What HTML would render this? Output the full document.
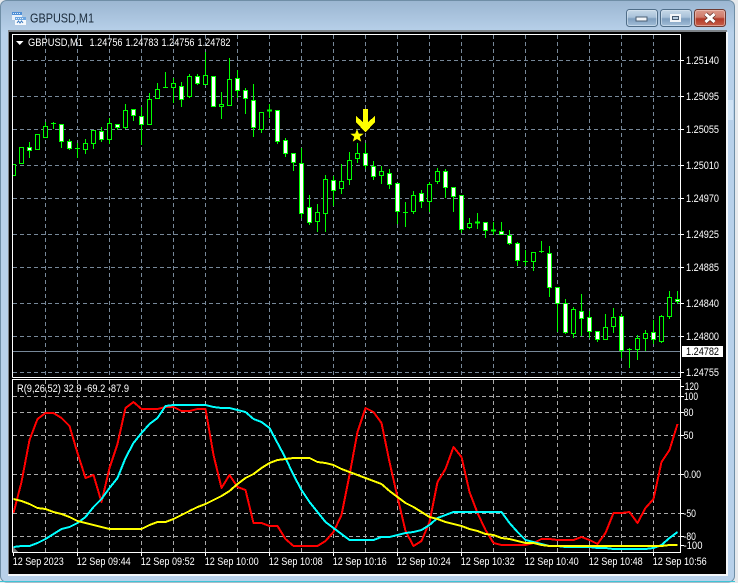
<!DOCTYPE html>
<html><head><meta charset="utf-8"><style>
html,body{margin:0;padding:0;width:738px;height:583px;overflow:hidden;background:#e6e9ec}
svg{display:block}
text{font-family:"Liberation Sans",sans-serif;font-size:11px;fill:#fff}
.c{shape-rendering:crispEdges}
</style></head><body>
<svg width="738" height="583" viewBox="0 0 738 583" xmlns="http://www.w3.org/2000/svg">
<defs>
<linearGradient id="tb" x1="0" y1="0" x2="0" y2="1"><stop offset="0" stop-color="#9bb6d1"/><stop offset="0.055" stop-color="#b8d1ea"/><stop offset="1" stop-color="#b8d1ea"/></linearGradient>
<linearGradient id="bm" x1="0" y1="0" x2="0" y2="1"><stop offset="0" stop-color="#c9dae9"/><stop offset="0.45" stop-color="#a9c2da"/><stop offset="0.55" stop-color="#7f9fbf"/><stop offset="1" stop-color="#a5c0da"/></linearGradient>
<linearGradient id="bc" x1="0" y1="0" x2="0" y2="1"><stop offset="0" stop-color="#dc9a8c"/><stop offset="0.45" stop-color="#cf7b6b"/><stop offset="0.55" stop-color="#b23a28"/><stop offset="1" stop-color="#c9614c"/></linearGradient>
<clipPath id="cp"><rect x="12" y="34" width="669" height="344"/></clipPath>
<clipPath id="cl"><rect x="13" y="380" width="668" height="172"/></clipPath>
</defs>
<!-- window -->
<rect x="0.5" y="0.5" width="734" height="581.5" rx="6" fill="url(#tb)" stroke="#6f8ea6"/>
<path class="c" d="M0 581.5H735" stroke="#3fc4d6" fill="none"/>
<rect class="c" x="8" y="30" width="719" height="2" fill="#7d8287"/>
<rect class="c" x="8" y="30" width="1" height="544" fill="#7d8287"/>
<rect class="c" x="9" y="32" width="718" height="542" fill="#000"/>
<rect class="c" x="8" y="574" width="719" height="2" fill="#f4f7fa"/>
<rect class="c" x="726" y="32" width="2" height="544" fill="#f4f7fa"/>
<rect class="c" x="728" y="100" width="5" height="20" fill="#cfe2f4"/>
<!-- icon -->
<g class="c">
<rect x="12" y="12" width="10" height="8" fill="#e8f1fa"/>
<rect x="12" y="12" width="10" height="3" fill="#4f8fd6"/>
<path d="M13 13.5h1M15 13.5h1M17 13.5h1M19 13.5h1" stroke="#dcebf8"/>
<rect x="15" y="17" width="11" height="8" fill="#f6f9fc"/>
<rect x="15" y="17" width="11" height="3" fill="#6ea6e0"/>
<path d="M16 18.5h1M18 18.5h1M20 18.5h1M22 18.5h1" stroke="#e4eff9"/>
</g>
<path d="M17 23l1.5-2 1.5 2 1.5-2 1.5 2" stroke="#3d7cc2" fill="none" stroke-width="1"/>
<text x="30" y="22.5" style="font-size:12.5px;fill:#1c2c3c" textLength="64" lengthAdjust="spacingAndGlyphs">GBPUSD,M1</text>
<!-- buttons -->
<rect x="626.5" y="9.5" width="31" height="17" rx="3" fill="url(#bm)" stroke="#4f6d88"/>
<rect x="627.5" y="10.5" width="29" height="15" rx="2" fill="none" stroke="#dbe8f3" stroke-opacity=".6"/>
<rect class="c" x="636" y="17" width="11" height="4" fill="#f2f5f8" stroke="#4a5f74" stroke-width="0.8"/>
<rect x="660.5" y="9.5" width="31" height="17" rx="3" fill="url(#bm)" stroke="#4f6d88"/>
<rect x="661.5" y="10.5" width="29" height="15" rx="2" fill="none" stroke="#dbe8f3" stroke-opacity=".6"/>
<rect class="c" x="670" y="14" width="11" height="8" fill="#f2f5f8"/>
<rect class="c" x="672" y="16" width="7" height="4" fill="#465a70"/>
<rect class="c" x="673" y="17" width="5" height="2" fill="#b8cde0"/>
<rect x="694.5" y="9.5" width="31" height="17" rx="3" fill="url(#bc)" stroke="#6e3a32"/>
<rect x="695.5" y="10.5" width="29" height="15" rx="2" fill="none" stroke="#f2cfc6" stroke-opacity=".55"/>
<path d="M705.5 14l9 8M714.5 14l-9 8" stroke="#5a2a24" stroke-width="4.4" fill="none"/>
<path d="M705.5 14l9 8M714.5 14l-9 8" stroke="#fff" stroke-width="3" fill="none"/>
<!-- grid main -->
<g class="c" fill="none" stroke-width="1" stroke-dasharray="4 3">
<path stroke="#778899" d="M13 60.5H680M13 96.5H680M13 129.5H680M13 165.5H680M13 198.5H680M13 234.5H680M13 267.5H680M13 303.5H680M13 336.5H680M13 372.5H680"/>
<path stroke="#778899" d="M45.5 35V377M77.5 35V377M109.5 35V377M141.5 35V377M173.5 35V377M205.5 35V377M237.5 35V377M269.5 35V377M301.5 35V377M333.5 35V377M365.5 35V377M397.5 35V377M429.5 35V377M461.5 35V377M493.5 35V377M525.5 35V377M557.5 35V377M589.5 35V377M621.5 35V377M653.5 35V377"/>
<path stroke="#a8a8a8" d="M13 396.5H680M13 412.5H680M13 435.5H680M13 474.5H680M13 513.5H680M13 536.5H680M45.5 380V552M77.5 380V552M109.5 380V552M141.5 380V552M173.5 380V552M205.5 380V552M237.5 380V552M269.5 380V552M301.5 380V552M333.5 380V552M365.5 380V552M397.5 380V552M429.5 380V552M461.5 380V552M493.5 380V552M525.5 380V552M557.5 380V552M589.5 380V552M621.5 380V552M653.5 380V552"/>
</g>
<path class="c" d="M13 351.5H681" stroke="#778899" fill="none"/>
<!-- candles -->
<g class="c" clip-path="url(#cp)" fill="none">
<path stroke="#00ff00" d="M29.5 142V158M37.5 134V150M45.5 122V138M53.5 122V129M61.5 124V148M69.5 139V150M77.5 143V158M85.5 139V154M93.5 130V149M101.5 127V142M109.5 118V144M117.5 124V130M125.5 104V129M133.5 109V121M141.5 107V145M149.5 93V125M157.5 83V99M165.5 72V88M173.5 78V103M181.5 82V107M189.5 74V98M197.5 74V85M205.5 52V85M221.5 92V119M229.5 58V106M237.5 70V98M245.5 88V114M253.5 84V137M261.5 112V133M269.5 104V118M277.5 110V144M285.5 138V157M293.5 153V171M301.5 148V218M309.5 195V225M317.5 204V232M325.5 175V232M333.5 176V206M341.5 164V194M349.5 152V185M357.5 143V163M365.5 143V169M373.5 161V180M381.5 166V184M389.5 169V189M397.5 183V224M405.5 202V227M413.5 191V214M421.5 190V208M429.5 182V212M437.5 168V184M445.5 169V198M453.5 187V212M461.5 195V233M469.5 218V229M477.5 213V229M485.5 222V238M493.5 222V235M501.5 222V235M509.5 230V245M517.5 242V266M525.5 250V266M533.5 252V271M541.5 241V253M549.5 246V297M557.5 287V332M565.5 299V334M573.5 307V338M581.5 294V336M589.5 311V338M597.5 331V342M605.5 314V340M613.5 308V333M621.5 314V358M629.5 348V368M637.5 335V360M645.5 330V351M653.5 320V344M661.5 315V343M669.5 291V319M677.5 291V304M51 123.5h5M75 148.5h5M163 87.5h5M267 110h5M267 111h5M403 212.5h5M475 222h5M475 223h5M491 230h5M491 231h5M523 261.5h5M539 251.5h5M627 349.5h5"/>
<path stroke="#00ff00" fill="#000" d="M11.5 164.5h4v11h-4zM19.5 147.5h4v16h-4zM35.5 134.5h4v15h-4zM43.5 126.5h4v11h-4zM83.5 143.5h4v6h-4zM91.5 130.5h4v13h-4zM107.5 123.5h4v16h-4zM123.5 110.5h4v17h-4zM147.5 99.5h4v25h-4zM155.5 89.5h4v9h-4zM171.5 83.5h4v4h-4zM187.5 76.5h4v20h-4zM203.5 75.5h4v9h-4zM219.5 104.5h4v2h-4zM227.5 79.5h4v26h-4zM259.5 112.5h4v17h-4zM315.5 212.5h4v9h-4zM323.5 179.5h4v34h-4zM339.5 181.5h4v7h-4zM347.5 160.5h4v19h-4zM355.5 153.5h4v5h-4zM379.5 171.5h4v4h-4zM411.5 195.5h4v16h-4zM427.5 184.5h4v17h-4zM435.5 171.5h4v10h-4zM467.5 223.5h4v4h-4zM531.5 252.5h4v9h-4zM571.5 309.5h4v24h-4zM603.5 327.5h4v12h-4zM611.5 317.5h4v9h-4zM635.5 338.5h4v11h-4zM643.5 333.5h4v5h-4zM659.5 316.5h4v25h-4zM667.5 297.5h4v19h-4z"/>
<path stroke="#00ff00" fill="#fff" d="M27.5 147.5h4v3h-4zM59.5 124.5h4v17h-4zM67.5 141.5h4v7h-4zM99.5 131.5h4v8h-4zM115.5 124.5h4v3h-4zM131.5 109.5h4v6h-4zM139.5 116.5h4v8h-4zM179.5 86.5h4v13h-4zM195.5 76.5h4v7h-4zM211.5 76.5h4v30h-4zM235.5 78.5h4v12h-4zM243.5 90.5h4v8h-4zM251.5 100.5h4v27h-4zM275.5 110.5h4v31h-4zM283.5 140.5h4v13h-4zM291.5 153.5h4v9h-4zM299.5 163.5h4v50h-4zM307.5 207.5h4v15h-4zM331.5 180.5h4v10h-4zM363.5 153.5h4v12h-4zM371.5 166.5h4v10h-4zM387.5 173.5h4v11h-4zM395.5 183.5h4v28h-4zM419.5 193.5h4v8h-4zM443.5 171.5h4v16h-4zM451.5 187.5h4v9h-4zM459.5 195.5h4v34h-4zM483.5 222.5h4v8h-4zM499.5 231.5h4v3h-4zM507.5 235.5h4v8h-4zM515.5 243.5h4v17h-4zM547.5 253.5h4v34h-4zM555.5 287.5h4v16h-4zM563.5 303.5h4v29h-4zM579.5 311.5h4v7h-4zM587.5 317.5h4v14h-4zM595.5 331.5h4v8h-4zM619.5 316.5h4v34h-4zM651.5 332.5h4v7h-4zM675.5 299.5h4v2h-4z"/>
</g>
<!-- star & arrow -->
<polygon points="357,129 358.8,133.6 363.6,133.8 359.8,136.8 361.2,141.6 357,139 352.8,141.6 354.2,136.8 350.4,133.8 355.2,133.6" fill="#ffff00"/>
<polygon class="c" points="363,109 368,109 368,122 375,116 375,122 365.5,132.5 356,122 356,116 363,122" fill="#ffff00"/>
<!-- oscillator lines -->
<g class="c" clip-path="url(#cl)" fill="none" stroke-width="2" stroke-linejoin="round">
<polyline stroke="#ff0000" points="13.5,513 21.5,482 29.5,440 37.5,419 45.5,413 53.5,413 61.5,418 69.5,426 77.5,453 85.5,478 93.5,475 101.5,502 109.5,468 117.5,444 125.5,408 133.5,402 141.5,409 149.5,409 157.5,409 165.5,407 173.5,407 181.5,411 189.5,411 197.5,409 205.5,409 213.5,455 221.5,488 229.5,475 237.5,487 245.5,490 253.5,523 261.5,523 269.5,526 277.5,526 285.5,539 293.5,546 301.5,546 309.5,546 317.5,546 325.5,541 333.5,532 341.5,515 349.5,475 357.5,432 365.5,408 373.5,412 381.5,423 389.5,462 397.5,497 405.5,531 413.5,546 421.5,541 429.5,522 437.5,482 445.5,469 453.5,447 461.5,457 469.5,492 477.5,513 485.5,530 493.5,543 501.5,545 509.5,545 517.5,545 525.5,545 533.5,543 541.5,539 549.5,539 557.5,540 565.5,540 573.5,540 581.5,537 589.5,540 597.5,544 605.5,533 613.5,513 621.5,513 629.5,512 637.5,523 645.5,508 653.5,499 661.5,462 669.5,450 677.5,424"/>
<polyline stroke="#00ffff" points="13.5,547 21.5,546 29.5,546 37.5,543 45.5,539 53.5,534 61.5,529 69.5,527 77.5,523 85.5,517 93.5,507 101.5,499 109.5,488 117.5,478 125.5,458 133.5,443 141.5,433 149.5,424 157.5,418 165.5,406 173.5,405 181.5,405 189.5,405 197.5,405 205.5,405 213.5,407 221.5,408 229.5,408 237.5,410 245.5,412 253.5,419 261.5,422 269.5,428 277.5,443 285.5,458 293.5,475 301.5,490 309.5,502 317.5,512 325.5,522 333.5,528 341.5,534 349.5,540 357.5,540 365.5,540 373.5,540 381.5,537 389.5,537 397.5,535 405.5,533 413.5,532 421.5,530 429.5,525 437.5,518 445.5,515 453.5,512 461.5,512 469.5,512 477.5,512 485.5,512 493.5,512 501.5,512 509.5,523 517.5,532 525.5,540 533.5,542 541.5,544 549.5,546 557.5,546 565.5,547 573.5,547 581.5,547 589.5,547 597.5,548 605.5,548 613.5,549 621.5,549 629.5,549 637.5,549 645.5,549 653.5,548 661.5,545 669.5,538 677.5,532"/>
<polyline stroke="#ffff00" points="13.5,499 21.5,501 29.5,504 37.5,508 45.5,509 53.5,512 61.5,514 69.5,517 77.5,521 85.5,523 93.5,525 101.5,527 109.5,529 117.5,529 125.5,529 133.5,529 141.5,529 149.5,525 157.5,522 165.5,522 173.5,519 181.5,515 189.5,511 197.5,507 205.5,504 213.5,500 221.5,496 229.5,491 237.5,484 245.5,478 253.5,474 261.5,468 269.5,463 277.5,460 285.5,459 293.5,458 301.5,458 309.5,458 317.5,462 325.5,463 333.5,465 341.5,469 349.5,472 357.5,475 365.5,478 373.5,481 381.5,484 389.5,491 397.5,497 405.5,503 413.5,507 421.5,512 429.5,517 437.5,519 445.5,522 453.5,524 461.5,526 469.5,529 477.5,531 485.5,534 493.5,535 501.5,538 509.5,539 517.5,541 525.5,543 533.5,543 541.5,545 549.5,546 557.5,546 661.5,546 669.5,545 677.5,545"/>
</g>
<polygon class="c" points="13,547 13,552 18,552" fill="#777"/>
<!-- frames and ticks -->
<g class="c" fill="none" stroke="#fff">
<path d="M12.5 377.5V34.5H680.5V377.5H12.5M12.5 552.5V379.5H680.5V552.5H12.5"/>
<path d="M681 60.5h3M681 96.5h3M681 129.5h3M681 165.5h3M681 198.5h3M681 234.5h3M681 267.5h3M681 303.5h3M681 336.5h3M681 372.5h3M681 396.5h3M681 412.5h3M681 435.5h3M681 474.5h3M681 513.5h3M681 536.5h3M681 545.5h3M681 386.5h3"/>
<path d="M13.5 553v3M77.5 553v3M141.5 553v3M205.5 553v3M269.5 553v3M333.5 553v3M397.5 553v3M461.5 553v3M525.5 553v3M589.5 553v3M653.5 553v3"/>
</g>
<!-- header text -->
<polygon points="16,41 23.5,41 19.75,45" fill="#fff"/>
<text x="28" y="46" textLength="55" lengthAdjust="spacingAndGlyphs">GBPUSD,M1</text>
<text x="89.5" y="46" textLength="33" lengthAdjust="spacingAndGlyphs">1.24756</text>
<text x="125.5" y="46" textLength="33" lengthAdjust="spacingAndGlyphs">1.24783</text>
<text x="161.5" y="46" textLength="33" lengthAdjust="spacingAndGlyphs">1.24756</text>
<text x="197.5" y="46" textLength="33" lengthAdjust="spacingAndGlyphs">1.24782</text>
<text x="17" y="392" textLength="112" lengthAdjust="spacingAndGlyphs">R(9,26,52) 32.9 -69.2 -87.9</text>
<!-- price axis -->
<g>
<text x="686" y="64" textLength="33" lengthAdjust="spacingAndGlyphs">1.25140</text>
<text x="686" y="100" textLength="33" lengthAdjust="spacingAndGlyphs">1.25095</text>
<text x="686" y="133" textLength="33" lengthAdjust="spacingAndGlyphs">1.25055</text>
<text x="686" y="169" textLength="33" lengthAdjust="spacingAndGlyphs">1.25010</text>
<text x="686" y="202" textLength="33" lengthAdjust="spacingAndGlyphs">1.24970</text>
<text x="686" y="238" textLength="33" lengthAdjust="spacingAndGlyphs">1.24925</text>
<text x="686" y="271" textLength="33" lengthAdjust="spacingAndGlyphs">1.24885</text>
<text x="686" y="307" textLength="33" lengthAdjust="spacingAndGlyphs">1.24840</text>
<text x="686" y="340" textLength="33" lengthAdjust="spacingAndGlyphs">1.24800</text>
<rect class="c" x="682" y="346" width="41" height="11" fill="#fff"/>
<text x="686" y="355" textLength="33" lengthAdjust="spacingAndGlyphs" style="fill:#000">1.24782</text>
<text x="686" y="376" textLength="33" lengthAdjust="spacingAndGlyphs">1.24755</text>
<text x="684.7" y="390" textLength="14" lengthAdjust="spacingAndGlyphs">120</text>
<text x="684" y="400" textLength="14" lengthAdjust="spacingAndGlyphs">100</text>
<text x="683.5" y="416" textLength="10" lengthAdjust="spacingAndGlyphs">80</text>
<text x="683.5" y="439" textLength="10" lengthAdjust="spacingAndGlyphs">50</text>
<text x="684" y="478" textLength="17" lengthAdjust="spacingAndGlyphs">0.00</text>
<text x="683.5" y="517" textLength="12.5" lengthAdjust="spacingAndGlyphs">-50</text>
<text x="683.5" y="540" textLength="12.5" lengthAdjust="spacingAndGlyphs">-80</text>
<text x="683.5" y="549" textLength="19" lengthAdjust="spacingAndGlyphs">-100</text>
</g>
<!-- time axis -->
<g>
<text x="12.7" y="565" textLength="51" lengthAdjust="spacingAndGlyphs">12 Sep 2023</text>
<text x="76.7" y="565" textLength="54" lengthAdjust="spacingAndGlyphs">12 Sep 09:44</text>
<text x="140.7" y="565" textLength="54" lengthAdjust="spacingAndGlyphs">12 Sep 09:52</text>
<text x="204.7" y="565" textLength="54" lengthAdjust="spacingAndGlyphs">12 Sep 10:00</text>
<text x="268.7" y="565" textLength="54" lengthAdjust="spacingAndGlyphs">12 Sep 10:08</text>
<text x="332.7" y="565" textLength="54" lengthAdjust="spacingAndGlyphs">12 Sep 10:16</text>
<text x="396.7" y="565" textLength="54" lengthAdjust="spacingAndGlyphs">12 Sep 10:24</text>
<text x="460.7" y="565" textLength="54" lengthAdjust="spacingAndGlyphs">12 Sep 10:32</text>
<text x="524.7" y="565" textLength="54" lengthAdjust="spacingAndGlyphs">12 Sep 10:40</text>
<text x="588.7" y="565" textLength="54" lengthAdjust="spacingAndGlyphs">12 Sep 10:48</text>
<text x="652.7" y="565" textLength="54" lengthAdjust="spacingAndGlyphs">12 Sep 10:56</text>
</g>
</svg>
</body></html>
